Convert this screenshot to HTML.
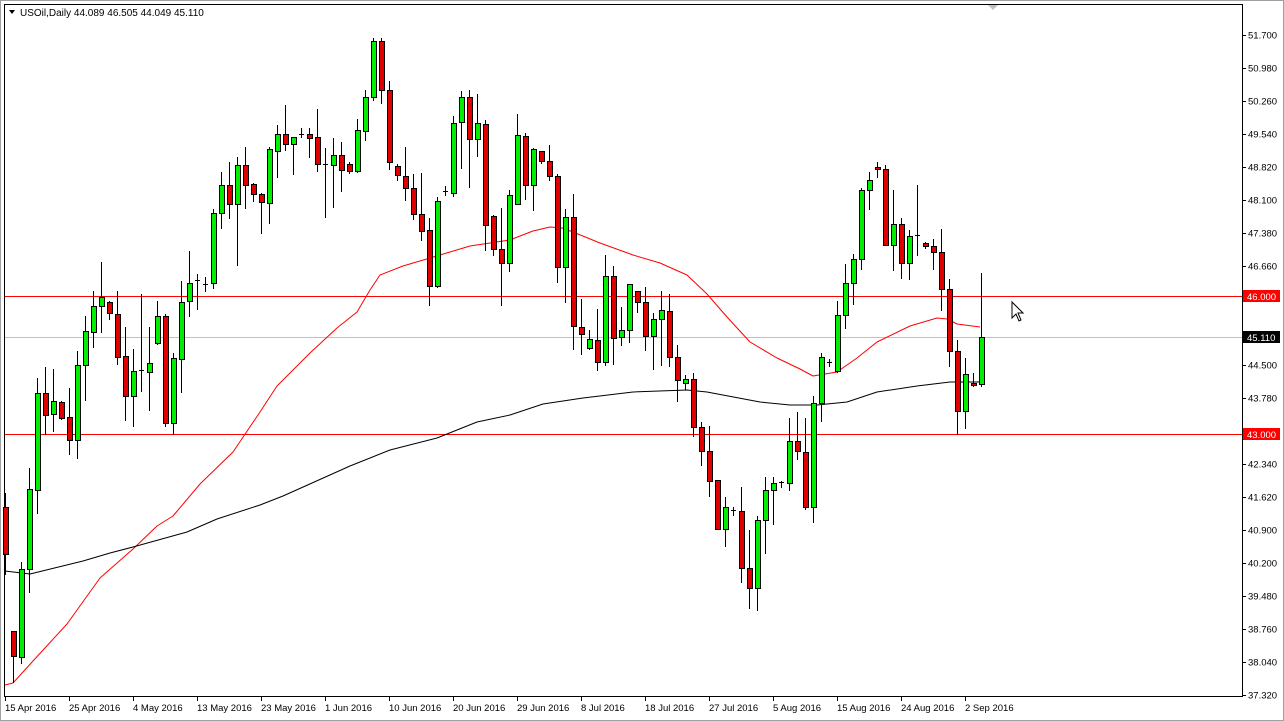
<!DOCTYPE html>
<html><head><meta charset="utf-8"><style>
html,body{margin:0;padding:0;background:#fff;width:1284px;height:721px;overflow:hidden}
svg{display:block;font-family:"Liberation Sans",sans-serif}
</style></head><body>
<svg id="s" width="1284" height="721" xmlns="http://www.w3.org/2000/svg">
<rect x="0" y="0" width="1284" height="721" fill="#fff"/>
<rect x="0.5" y="0.5" width="1283" height="720" fill="none" stroke="#a0a0a0"/>
<rect x="4.5" y="4.5" width="1238" height="692" fill="#fff" stroke="#000"/>
<polygon points="988,5 998,5 993,10" fill="#c0c0c0"/>
<line x1="5" y1="337.5" x2="1242" y2="337.5" stroke="#c0c0c0"/>
<line x1="5" y1="296.5" x2="1242" y2="296.5" stroke="#ff0000"/>
<line x1="5" y1="434.5" x2="1242" y2="434.5" stroke="#ff0000"/>
<g id="ma"></g>
<g id="c"></g>
<g id="ax" font-size="9.5" fill="#000"></g>
<text x="20" y="16" font-size="10" fill="#000">USOil,Daily  44.089 46.505 44.049 45.110</text>
<polygon points="9,10 15,10 12,14" fill="#000"/>
<rect x="1243" y="290" width="37" height="12" fill="#ff0000"/>
<text x="1247" y="300" font-size="9.5" fill="#fff">46.000</text>
<rect x="1243" y="331" width="37" height="12" fill="#000"/>
<text x="1247" y="341" font-size="9.5" fill="#fff">45.110</text>
<rect x="1243" y="428" width="37" height="12" fill="#ff0000"/>
<text x="1247" y="438" font-size="9.5" fill="#fff">43.000</text>
<path d="M1012,302 L1012,318 L1016,314 L1019,321 L1021,320 L1018,313 L1023,313 Z" fill="#fff" stroke="#000" stroke-width="1"/>
</svg>
<script>
var NS="http://www.w3.org/2000/svg",k=0.459;
function el(p,t,a){var e=document.createElementNS(NS,t);for(var n in a)e.setAttribute(n,a[n]);p.appendChild(e);return e;}
var d=[
[1075,1105,1208,1250,'r'],[1375,1375,1430,1485,'r'],[1225,1240,1432,1445,'g'],[1020,1065,1240,1290,'g'],[823,857,1068,1117,'g'],
[800,857,905,945,'r'],[805,873,903,938,'g'],[873,875,910,912,'r'],[845,908,958,990,'r'],[765,795,958,998,'g'],
[688,722,795,872,'g'],[633,667,723,755,'g'],[570,647,667,723,'g'],[655,658,683,695,'r'],[633,685,778,793,'r'],
[712,775,863,915,'r'],[760,808,863,928,'g'],[640,807,809,852,'d'],[713,790,810,893,'g'],[655,688,748,750,'g'],
[685,688,922,928,'r'],[768,780,922,945,'g'],[612,657,783,853,'g'],[547,617,655,688,'g'],[598,611,613,673,'d'],
[603,619,621,633,'d'],[455,463,617,628,'g'],[375,404,463,497,'g'],[353,404,445,475,'r'],[343,360,445,577,'g'],
[320,360,402,453,'r'],[398,400,423,438,'r'],[420,422,441,508,'r'],[320,325,442,485,'g'],[273,291,328,385,'g'],
[228,291,313,327,'r'],[298,298,313,380,'g'],[278,292,294,298,'d'],[278,292,300,343,'r'],[237,298,358,373,'r'],
[322,357,359,473,'d'],[300,338,360,452,'g'],[310,338,370,417,'r'],[353,358,373,377,'r'],[260,283,373,375,'g'],
[197,212,285,305,'g'],[83,90,212,218,'g'],[83,90,195,225,'r'],[177,195,353,368,'r'],[358,362,382,392,'r'],
[320,383,410,435,'r'],[380,410,467,478,'r'],[377,467,503,522,'r'],[475,502,623,665,'r'],[430,437,623,625,'g'],
[405,417,419,425,'d'],[253,267,420,428,'g'],[198,212,265,365,'g'],[197,212,302,408,'r'],[205,268,302,340,'g'],
[262,270,490,545,'r'],[468,470,542,556,'r'],[453,543,573,665,'r'],[413,425,573,590,'g'],[248,295,445,445,'g'],
[290,297,403,433,'r'],[322,325,403,458,'g'],[328,328,350,355,'r'],[315,350,383,393,'r'],[380,383,582,615,'r'],
[455,473,582,657,'g'],[423,473,710,760,'r'],[652,712,728,772,'r'],[720,738,758,760,'g'],[673,741,788,806,'r'],
[555,602,788,795,'g'],[580,602,737,792,'r'],[668,718,735,752,'g'],[618,618,720,745,'g'],[635,635,657,680,'r'],
[625,657,733,763,'r'],[682,695,733,805,'g'],[635,675,695,795,'g'],[640,677,778,797,'r'],[752,777,828,873,'r'],
[818,825,835,848,'g'],[812,825,930,950,'r'],[920,930,983,1013,'r'],[928,982,1047,1080,'r'],[1045,1045,1152,1152,'r'],
[1082,1105,1152,1190,'g'],[1105,1112,1114,1122,'d'],[1060,1113,1237,1268,'r'],[1155,1237,1282,1325,'r'],[1125,1132,1282,1328,'g'],
[1040,1068,1132,1205,'g'],[1040,1052,1067,1142,'g'],[1048,1051,1053,1062,'d'],[910,960,1052,1068,'g'],[898,960,983,1000,'r'],
[910,985,1105,1108,'r'],[862,877,1105,1138,'g'],[770,777,877,918,'g'],[783,789,791,797,'d'],[655,687,808,810,'g'],
[575,617,687,715,'g'],[553,565,617,663,'g'],[410,415,565,585,'g'],[375,392,415,455,'g'],[352,364,366,385,'r'],
[360,368,533,533,'r'],[415,487,533,588,'g'],[475,488,572,605,'r'],[500,515,573,607,'g'],[402,511,513,555,'d'],
[528,530,537,540,'r'],[520,537,548,587,'r'],[498,550,630,675,'r'],[608,630,765,798,'r'],[740,765,895,945,'r'],
[780,815,895,932,'g'],[812,835,838,840,'r'],[595,735,837,842,'g']];
var c=document.getElementById('c');
for(var i=0;i<d.length;i++){var x=5+8*i,a=d[i];
var H=Math.round(a[0]*k),T=Math.round(a[1]*k),B=Math.round(a[2]*k),L=Math.round(a[3]*k);
el(c,'line',{x1:x+.5,y1:H,x2:x+.5,y2:L+1,stroke:'#000'});
if(a[4]=='d'){el(c,'line',{x1:x-2,y1:T+.5,x2:x+3,y2:T+.5,stroke:'#000'});}
else{if(B-T<2)B=T+2;el(c,'rect',{x:x-2+.5,y:T+.5,width:5,height:B-T,fill:a[4]=='g'?'#00ee00':'#e00000',stroke:'#000'});}
}
var ma=document.getElementById('ma');
var red=[[5,685],[13,683],[33,661],[67,624],[100,578],[133,549],[157,526],[173,516],[200,484],[233,452],[260,412],[277,386],[310,353],[337,328],[357,312],[370,290],[380,275],[403,266],[430,258],[450,252],[470,246],[490,243],[510,240],[520,236],[533,231],[550,227],[562,228],[573,232],[600,243],[633,255],[660,263],[687,275],[707,294],[727,317],[750,342],[777,358],[800,369],[813,376],[837,372],[857,358],[877,342],[910,326],[937,318],[947,319],[957,324],[980,327]];
var blk=[[5,571],[30,574],[83,561],[110,553],[133,547],[187,532],[217,519],[260,505],[283,496],[350,466],[390,450],[437,438],[477,422],[510,415],[543,404],[583,398],[633,392],[687,390],[707,392],[760,402],[790,405],[817,405],[847,402],[877,392],[917,386],[950,382],[980,382]];
function pl(p,col){el(ma,'polyline',{points:p.map(function(q){return q.join(',')}).join(' '),fill:'none',stroke:col,'stroke-width':1,'stroke-linejoin':'round'});}
pl(red,'#ff0000');pl(blk,'#000');
var ax=document.getElementById('ax');
var labs=[['51.700',35],['50.980',68],['50.260',101],['49.540',134],['48.820',167],['48.100',200],['47.380',233],['46.660',266],['44.500',365],['43.780',398],['42.340',464],['41.620',497],['40.900',530],['40.200',563],['39.480',596],['38.760',629],['38.040',662],['37.320',695]];
labs.forEach(function(l){el(ax,'line',{x1:1243,y1:l[1]+.5,x2:1246,y2:l[1]+.5,stroke:'#000'});var t=el(ax,'text',{x:1248,y:l[1]+3.5});t.textContent=l[0];});
var dts=['15 Apr 2016','25 Apr 2016','4 May 2016','13 May 2016','23 May 2016','1 Jun 2016','10 Jun 2016','20 Jun 2016','29 Jun 2016','8 Jul 2016','18 Jul 2016','27 Jul 2016','5 Aug 2016','15 Aug 2016','24 Aug 2016','2 Sep 2016'];
dts.forEach(function(s,i){var x=5+64*i;el(ax,'line',{x1:x+.5,y1:697,x2:x+.5,y2:701,stroke:'#000'});var t=el(ax,'text',{x:x,y:711});t.textContent=s;});
</script>
</body></html>
